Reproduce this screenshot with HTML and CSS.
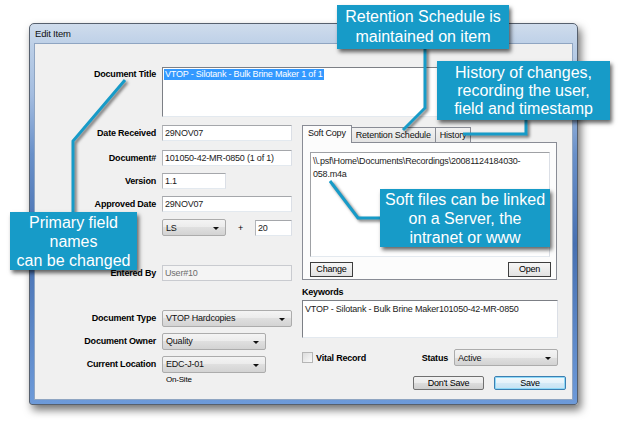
FILE: index.html
```html
<!DOCTYPE html>
<html lang="en">
<head>
<meta charset="UTF-8">
<title>Edit Item</title>
<link rel="stylesheet" href="styles.css">
</head>
<body>
<div class="page">
  <div class="window">
    <div class="titlebar">Edit Item</div>
    <div class="client">
      <div class="title-row">
        <div class="lbl">Document Title</div>
        <div class="box title-box"><span class="selected">VTOP - Silotank - Bulk Brine Maker 1 of 1</span></div>
      </div>
      <div class="form">
        <div class="left">
          <div class="row r-received"><div class="lbl">Date Received</div><div class="box w-full">29NOV07</div></div>
          <div class="row r-docno"><div class="lbl">Document#</div><div class="box w-full">101050-42-MR-0850 (1 of 1)</div></div>
          <div class="row r-version"><div class="lbl">Version</div><div class="box w-short">1.1</div></div>
          <div class="row r-approved"><div class="lbl">Approved Date</div><div class="box w-full">29NOV07</div></div>
          <div class="row r-period"><div class="lbl"></div><div class="combo w-short">LS</div><span class="plus">+</span><div class="box w-tiny">20</div></div>
          <div class="row r-entered"><div class="lbl">Entered By</div><div class="box disabled w-full">User#10</div></div>
          <div class="row r-type"><div class="lbl">Document Type</div><div class="combo w-full">VTOP Hardcopies</div></div>
          <div class="row r-owner"><div class="lbl">Document Owner</div><div class="combo w-mid">Quality</div></div>
          <div class="row r-location"><div class="lbl">Current Location</div><div class="combo w-mid">EDC-J-01</div></div>
          <div class="note">On-Site</div>
        </div>
        <div class="right">
          <div class="tabs">
            <div class="tab active">Soft Copy</div>
            <div class="tab">Retention Schedule</div>
            <div class="tab">History</div>
          </div>
          <div class="tab-panel">
            <div class="box path-box">\\.psf\Home\Documents\Recordings\20081124184030-<br>058.m4a</div>
            <div class="panel-buttons">
              <div class="btn-classic">Change</div>
              <div class="btn-classic">Open</div>
            </div>
          </div>
          <div class="kw-label">Keywords</div>
          <div class="box kw-box">VTOP - Silotank - Bulk Brine Maker101050-42-MR-0850</div>
          <div class="status-row">
            <span class="check"></span><span class="check-label">Vital Record</span>
            <span class="status-label">Status</span>
            <div class="combo w-status">Active</div>
          </div>
          <div class="dialog-buttons">
            <div class="btn">Don't Save</div>
            <div class="btn default">Save</div>
          </div>
        </div>
      </div>
    </div>
  </div>
</div>

<!-- leader lines of the callouts -->
<svg class="leaders" width="618" height="422" viewBox="0 0 618 422">
  <polyline points="425,48 425,108 403,130"/>
  <polyline points="526,119 526,134 463,134"/>
  <polyline points="73,213 73,141 125,80"/>
  <polyline points="381,218 358,218 330,181"/>
</svg>

<div class="callout c-retention">Retention Schedule is<br>maintained on item</div>
<div class="callout c-history">History of changes,<br>recording the user,<br>field and timestamp</div>
<div class="callout c-names">Primary field<br>names<br>can be changed</div>
<div class="callout c-files">Soft files can be linked<br>on a Server, the<br>intranet or www</div>
</body>
</html>
```

FILE: styles.css
```css
* { margin: 0; padding: 0; box-sizing: border-box; }

body {
  width: 618px;
  height: 422px;
  overflow: hidden;
  position: relative;
  background: #fff;
  font-family: "Liberation Sans", Arial, sans-serif;
  font-size: 9px;
  letter-spacing: -0.2px;
  color: #000;
}

.page { padding: 23px 0 0 29px; }

/* window frame */
.window {
  width: 549px;
  height: 382px;
  padding: 0 4px 4px 4px;
  display: flex;
  flex-direction: column;
  border: 1px solid #56606e;
  border-radius: 5px 5px 3px 3px;
  background: linear-gradient(to bottom, #cfdcec 0, #bccfe7 22px, #a4bde0 70px, #6990c9 130px, #4770b1 220px, #6d9ad9 100%);
  box-shadow: 3px 5px 8px rgba(0, 0, 0, .55);
}
.titlebar {
  height: 19px;
  line-height: 19px;
  padding-left: 1px;
  font-size: 9.5px;
  color: #111;
}
.client {
  flex: 1;
  background: #f0f0f0;
  border: 1px solid #8fa5c2;
  padding-top: 23px;
}

/* generic controls */
.lbl {
  width: 121px;
  margin-right: 6px;
  text-align: right;
  font-weight: bold;
  flex-shrink: 0;
}
.box {
  height: 16px;
  padding: 1px 2px;
  background: #fff;
  border: 1px solid;
  border-color: #a5a7ab #dbdfe6 #e3e9ef #b3b5b9;
  color: #1b1b1b;
  white-space: nowrap;
  display: flex;
  align-items: center;
}
.box.disabled { background: #f4f4f4; color: #6d6d6d; border-color: #c9cbd0; }
.combo {
  position: relative;
  height: 17px;
  padding: 0 12px 0 3px;
  display: flex;
  align-items: center;
  border: 1px solid #acacac;
  border-radius: 2px;
  background: linear-gradient(to bottom, #f4f4f4 0, #ebebeb 50%, #dfdfdf 50%, #d3d3d3 100%);
  color: #111;
}
.combo::after {
  content: "";
  position: absolute;
  right: 6px;
  top: 7px;
  border-left: 3px solid transparent;
  border-right: 3px solid transparent;
  border-top: 3px solid #111;
}
.w-full { width: 130px; }
.w-short { width: 64px; }
.w-mid { width: 104px; }
.w-tiny { width: 37px; }

/* top field */
.title-row { display: flex; align-items: flex-start; }
.title-row .lbl { margin-top: 2px; }
.title-box {
  width: 395px;
  height: 50px;
  align-items: flex-start;
  padding: 1px;
  border-color: #7c7f85 #dbdfe6 #e3e9ef #7c7f85;
}
.selected { background: #3399ff; color: #fff; padding: 0 1px; line-height: 11px; }

.form { display: flex; margin-top: 8px; }

/* left column */
.left { width: 267px; }
.row { display: flex; align-items: center; height: 16px; }
.r-docno { margin-top: 9px; }
.r-version, .r-approved, .r-period, .r-owner { margin-top: 7px; }
.r-period { height: 17px; }
.r-entered { margin-top: 29px; }
.r-type { margin-top: 29px; }
.r-location { margin-top: 7px; }
.plus { width: 29px; text-align: center; }
.note { margin: 3px 0 0 131px; font-size: 8px; }

/* right column */
.right { width: 264px; }
.tabs { display: flex; align-items: flex-end; height: 17px; }
.tab {
  height: 15px;
  line-height: 14px;
  padding: 0 4px;
  margin-left: -1px;
  border: 1px solid #898c95;
  border-bottom: none;
  background: linear-gradient(to bottom, #f2f2f2, #e3e3e3);
  color: #111;
}
.tab:first-child { margin-left: 0; }
.tab.active {
  height: 18px;
  margin-bottom: -1px;
  position: relative;
  padding: 0 5px;
  background: #fcfcfc;
  line-height: 15px;
}
.tab-panel {
  width: 255px;
  height: 138px;
  padding: 9px 6px 0 7px;
  border: 1px solid #898c95;
  background: #fcfcfc;
}
.path-box {
  height: 105px;
  white-space: normal;
  align-items: flex-start;
  line-height: 13px;
  padding: 2px 2px;
  border-color: #9fa1a5 #dbdfe6 #e3e9ef #9fa1a5;
}
.panel-buttons { display: flex; justify-content: space-between; margin-top: 5px; }
.btn-classic {
  width: 43px;
  height: 15px;
  line-height: 13px;
  text-align: center;
  border: 1px solid #3e3e3e;
  background: linear-gradient(to bottom, #f6f6f6, #e2e2e2);
}
.panel-buttons .btn-classic:last-child { margin-right: -1px; }
.kw-label { margin-top: 7px; height: 13px; font-weight: bold; }
.kw-box {
  width: 256px;
  height: 38px;
  align-items: flex-start;
  padding: 3px 2px;
  border-color: #7c7f85 #dbdfe6 #e3e9ef #7c7f85;
}
.status-row { display: flex; align-items: center; width: 256px; height: 17px; margin-top: 11px; }
.check {
  width: 11px;
  height: 11px;
  border: 1px solid #b5b5b5;
  background: linear-gradient(135deg, #dcdcdc, #fafafa);
}
.check-label { margin-left: 3px; font-weight: bold; }
.status-label { margin-left: auto; margin-right: 6px; font-weight: bold; }
.w-status { width: 104px; }
.dialog-buttons { display: flex; justify-content: flex-end; gap: 10px; margin-top: 10px; }
.btn {
  width: 71px;
  height: 14px;
  line-height: 12px;
  text-align: center;
  border: 1px solid #707070;
  border-radius: 2px;
  background: linear-gradient(to bottom, #f2f2f2 0, #ebebeb 50%, #dddddd 50%, #cfcfcf 100%);
}
.btn.default {
  width: 72px;
  border-color: #3c7fb1;
  box-shadow: inset 0 0 0 1px #8fd9f8;
  background: linear-gradient(to bottom, #f0f8fc 0, #e4f2fa 50%, #d4eaf7 50%, #c6e2f3 100%);
}

/* callouts over the dialog */
.leaders { position: absolute; left: 0; top: 0; filter: drop-shadow(2px 2px 1.5px rgba(0, 0, 0, .55)); }
.leaders polyline { fill: none; stroke: #179bc8; stroke-width: 3; }
.callout {
  position: absolute;
  display: flex;
  flex-direction: column;
  justify-content: center;
  background: #179bc8;
  color: #fff;
  font-size: 16px;
  letter-spacing: 0;
  line-height: 19px;
  text-align: center;
  box-shadow: 2px 3px 4px rgba(0, 0, 0, .6);
}
.c-retention { left: 337px; top: 5px; width: 172px; height: 44px; line-height: 20px; }
.c-history { left: 437px; top: 61px; width: 173px; height: 59px; line-height: 18px; }
.c-names { left: 10px; top: 212px; width: 127px; height: 58px; }
.c-files { left: 380px; top: 189px; width: 170px; height: 58px; }
```
